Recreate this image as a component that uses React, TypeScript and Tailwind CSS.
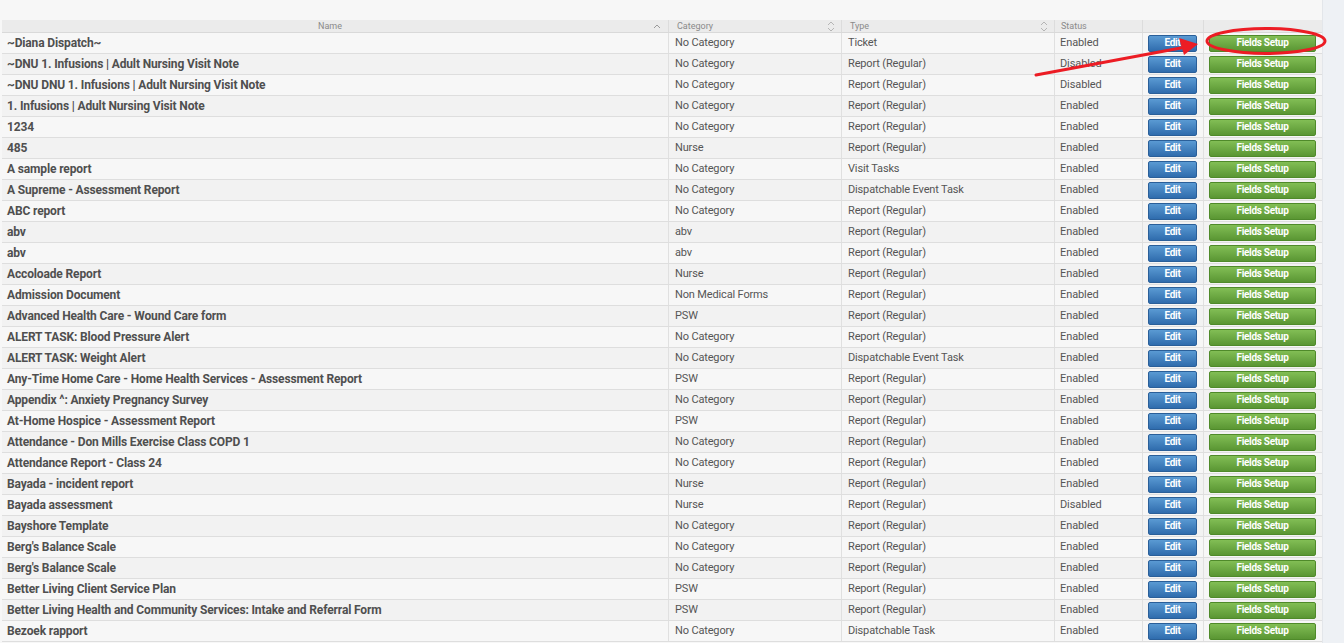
import React from 'react';

type Row = { name: string; category: string; type: string; status: string };

const rows: Row[] = [
    { name: '~Diana Dispatch~', category: 'No Category', type: 'Ticket', status: 'Enabled' },
    { name: '~DNU 1. Infusions | Adult Nursing Visit Note', category: 'No Category', type: 'Report (Regular)', status: 'Disabled' },
    { name: '~DNU DNU 1. Infusions | Adult Nursing Visit Note', category: 'No Category', type: 'Report (Regular)', status: 'Disabled' },
    { name: '1. Infusions | Adult Nursing Visit Note', category: 'No Category', type: 'Report (Regular)', status: 'Enabled' },
    { name: '1234', category: 'No Category', type: 'Report (Regular)', status: 'Enabled' },
    { name: '485', category: 'Nurse', type: 'Report (Regular)', status: 'Enabled' },
    { name: 'A sample report', category: 'No Category', type: 'Visit Tasks', status: 'Enabled' },
    { name: 'A Supreme - Assessment Report', category: 'No Category', type: 'Dispatchable Event Task', status: 'Enabled' },
    { name: 'ABC report', category: 'No Category', type: 'Report (Regular)', status: 'Enabled' },
    { name: 'abv', category: 'abv', type: 'Report (Regular)', status: 'Enabled' },
    { name: 'abv', category: 'abv', type: 'Report (Regular)', status: 'Enabled' },
    { name: 'Accoloade Report', category: 'Nurse', type: 'Report (Regular)', status: 'Enabled' },
    { name: 'Admission Document', category: 'Non Medical Forms', type: 'Report (Regular)', status: 'Enabled' },
    { name: 'Advanced Health Care - Wound Care form', category: 'PSW', type: 'Report (Regular)', status: 'Enabled' },
    { name: 'ALERT TASK: Blood Pressure Alert', category: 'No Category', type: 'Report (Regular)', status: 'Enabled' },
    { name: 'ALERT TASK: Weight Alert', category: 'No Category', type: 'Dispatchable Event Task', status: 'Enabled' },
    { name: 'Any-Time Home Care - Home Health Services - Assessment Report', category: 'PSW', type: 'Report (Regular)', status: 'Enabled' },
    { name: 'Appendix ^: Anxiety Pregnancy Survey', category: 'No Category', type: 'Report (Regular)', status: 'Enabled' },
    { name: 'At-Home Hospice - Assessment Report', category: 'PSW', type: 'Report (Regular)', status: 'Enabled' },
    { name: 'Attendance - Don Mills Exercise Class COPD 1', category: 'No Category', type: 'Report (Regular)', status: 'Enabled' },
    { name: 'Attendance Report - Class 24', category: 'No Category', type: 'Report (Regular)', status: 'Enabled' },
    { name: 'Bayada - incident report', category: 'Nurse', type: 'Report (Regular)', status: 'Enabled' },
    { name: 'Bayada assessment', category: 'Nurse', type: 'Report (Regular)', status: 'Disabled' },
    { name: 'Bayshore Template', category: 'No Category', type: 'Report (Regular)', status: 'Enabled' },
    { name: "Berg's Balance Scale", category: 'No Category', type: 'Report (Regular)', status: 'Enabled' },
    { name: "Berg's Balance Scale", category: 'No Category', type: 'Report (Regular)', status: 'Enabled' },
    { name: 'Better Living Client Service Plan', category: 'PSW', type: 'Report (Regular)', status: 'Enabled' },
    { name: 'Better Living Health and Community Services: Intake and Referral Form', category: 'PSW', type: 'Report (Regular)', status: 'Enabled' },
    { name: 'Bezoek rapport', category: 'No Category', type: 'Dispatchable Task', status: 'Enabled' },
];

const cols = 'grid grid-cols-[667px_173px_213px_88px_61px_118px]';

const SortBoth: React.FC = () => (
    <svg width="8" height="11" viewBox="0 0 8 11" className="shrink-0">
        <path d="M1 4 L4 1 L7 4 M1 7 L4 10 L7 7" fill="none" stroke="#b5b5b5" strokeWidth="1" />
    </svg>
);

const SortUp: React.FC = () => (
    <svg width="8" height="6" viewBox="0 0 8 6" className="shrink-0">
        <path d="M1 5 L4 2 L7 5" fill="none" stroke="#9a9a9a" strokeWidth="1" />
    </svg>
);

export default function App() {
    return (
        <div className="relative w-[1344px] h-[643px] overflow-hidden bg-[#f7f7f7] font-['Roboto',sans-serif] flex">
            <div className="w-[1322px] pt-[20px] pl-[2px] flex flex-col">
                {/* header */}
                <div className={`${cols} h-[13px] bg-[#ebebeb] border-b border-[#d9d9d9] text-[9px] leading-[12px] text-[#8a8a8a]`}>
                    <div className="relative flex items-center justify-center pr-[10px] border-r border-[#dcdcdc]">
                        Name
                        <span className="absolute right-[7px] top-[3px]"><SortUp /></span>
                    </div>
                    <div className="flex items-center justify-between pl-[8px] pr-[6px] border-r border-[#dcdcdc]">
                        Category <SortBoth />
                    </div>
                    <div className="flex items-center justify-between pl-[8px] pr-[6px] border-r border-[#dcdcdc]">
                        Type <SortBoth />
                    </div>
                    <div className="flex items-center pl-[6px] border-r border-[#dcdcdc]">Status</div>
                    <div className="border-r border-[#dcdcdc]"></div>
                    <div></div>
                </div>

                {rows.map((row, idx) => (
                    <div
                        key={idx}
                        className={`${cols} h-[21px] border-b border-[#dedede] ${idx % 2 === 0 ? 'bg-[#f7f7f7]' : 'bg-[#f2f2f2]'}`}
                    >
                        <div className="flex items-center pl-[5px] text-[12px] font-bold tracking-[-0.14px] text-[#4f4f4f] border-r border-[#e0e0e0] whitespace-nowrap">
                            {row.name}
                        </div>
                        <div className="flex items-center pl-[6px] text-[11px] tracking-[-0.15px] text-[#555555] border-r border-[#e0e0e0]">
                            {row.category}
                        </div>
                        <div className="flex items-center pl-[6px] text-[11px] tracking-[-0.15px] text-[#555555] border-r border-[#e0e0e0]">
                            {row.type}
                        </div>
                        <div className="flex items-center pl-[5px] text-[11px] tracking-[-0.1px] text-[#555555] border-r border-[#e0e0e0]">
                            {row.status}
                        </div>
                        <div className="flex items-center pl-[5px] border-r border-[#e0e0e0]">
                            <button className="w-[49px] h-[17px] rounded-[2px] border border-[#2a5f99] bg-gradient-to-b from-[#5a9ad3] to-[#2f6cad] text-white text-[10px] font-bold tracking-[-0.3px] leading-none">
                                Edit
                            </button>
                        </div>
                        <div className="flex items-center pl-[5px]">
                            <button className="w-[107px] h-[17px] rounded-[2px] border border-[#4f8a2a] bg-gradient-to-b from-[#82be55] to-[#5a9633] text-white text-[10px] font-bold tracking-[-0.3px] leading-none">
                                Fields Setup
                            </button>
                        </div>
                    </div>
                ))}
            </div>
            <div className="flex-1 bg-[#eef1f5] border-l border-[#e3e6ea]"></div>

            {/* annotation overlay */}
            <svg className="absolute left-0 top-0 pointer-events-none" width="1344" height="643">
                <ellipse cx="1266" cy="41" rx="59" ry="12.5" fill="none" stroke="#ec1c24" strokeWidth="3" />
                <line x1="1036" y1="75" x2="1186" y2="47" stroke="#ec1c24" strokeWidth="3" strokeLinecap="round" />
                <polygon points="1198,44 1179,38 1184,55" fill="#ec1c24" />
            </svg>
        </div>
    );
}
